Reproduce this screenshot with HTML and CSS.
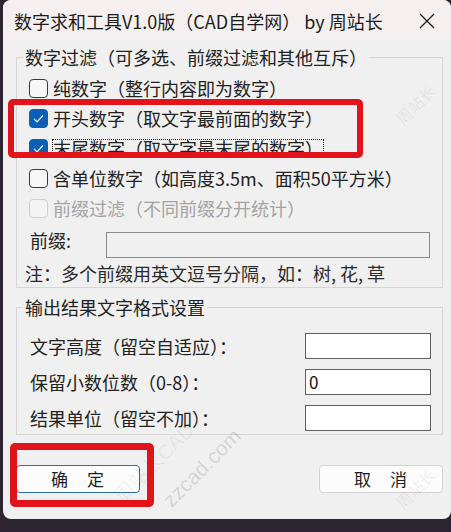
FILE: index.html
```html
<!DOCTYPE html>
<html lang="zh-CN">
<head>
<meta charset="utf-8">
<title>数字求和工具</title>
<link rel="stylesheet" href="styles.css">
</head>
<body>
<div class="window">
  <div class="titlebar">
    <span class="title">数字求和工具V1.0版（CAD自学网） by 周站长</span>
    <svg class="close" width="16" height="16" viewBox="0 0 16 16"><path d="M1 1 L15 15 M15 1 L1 15" stroke="#1e1e1e" stroke-width="1.3" fill="none"/></svg>
  </div>
  <div class="content">
    <fieldset class="group g1">
      <legend>数字过滤（可多选、前缀过滤和其他互斥）</legend>
      <div class="check"><span class="box"></span><span class="lbl">纯数字（整行内容即为数字）</span></div>
      <div class="check"><span class="box checked"><svg width="19" height="19" viewBox="0 0 19 19"><path d="M5 9.8 L8 12.8 L14 6.5" stroke="#fff" stroke-width="1.2" fill="none"/></svg></span><span class="lbl">开头数字（取文字最前面的数字）</span></div>
      <div class="check"><span class="box checked"><svg width="19" height="19" viewBox="0 0 19 19"><path d="M5 9.8 L8 12.8 L14 6.5" stroke="#fff" stroke-width="1.2" fill="none"/></svg></span><span class="lbl focus">末尾数字（取文字最末尾的数字）</span></div>
      <div class="check"><span class="box"></span><span class="lbl">含单位数字（如高度3.5m、面积50平方米）</span></div>
      <div class="check disabled"><span class="box"></span><span class="lbl">前缀过滤（不同前缀分开统计）</span></div>
      <div class="prefix-row"><span class="plabel">前缀:</span><span class="input input-disabled"></span></div>
      <div class="note">注：多个前缀用英文逗号分隔，如：树, 花, 草</div>
    </fieldset>
    <fieldset class="group g2">
      <legend>输出结果文字格式设置</legend>
      <div class="field"><span class="flabel">文字高度（留空自适应）：</span><span class="input"></span></div>
      <div class="field"><span class="flabel">保留小数位数（0-8）：</span><span class="input">0</span></div>
      <div class="field"><span class="flabel">结果单位（留空不加）：</span><span class="input"></span></div>
    </fieldset>
    <div class="buttons">
      <button class="btn primary">确　定</button>
      <button class="btn">取　消</button>
    </div>
  </div>
  <span class="wm wm1">zzcad.com</span>
  <span class="wm wm2">周站长CAD</span>
  <span class="wm wm3">周站长</span>
  <span class="wm wm4">周站长</span>
</div>
<div class="mark mark1"></div>
<div class="mark mark2"></div>
</body>
</html>
```
FILE: styles.css
```css
html, body {
  margin: 0;
  padding: 0;
}
body {
  position: relative;
  width: 451px;
  height: 532px;
  overflow: hidden;
  background: #2c2430;
  font-family: "Noto Sans CJK SC", sans-serif;
  color: #222;
}
.window {
  position: relative;
  margin-left: 3px;
  width: 448px;
  height: 519px;
  background: #f0f0f0;
  border-radius: 8px;
  overflow: hidden;
}
.titlebar {
  height: 39px;
  box-sizing: border-box;
  padding: 2px 16px 0 11px;
  display: flex;
  align-items: center;
  justify-content: space-between;
  background: #f5f0ef;
}
.title {
  font-size: 18px;
  line-height: 22px;
  color: #1b1b1b;
  white-space: nowrap;
}
.close {
  display: block;
}
.content {
  padding: 8px 8px 0 13px;
}
.group {
  margin: 0;
  min-width: 0;
  box-sizing: border-box;
  width: 427px;
  border: 1px solid #d6d6d6;
  padding: 0 0 3px 8px;
}
.group legend {
  font-size: 18px;
  line-height: 20px;
  padding: 0 2px;
  margin-left: -2px;
  color: #222;
}
.g1 {
  padding-top: 6px;
}
.g2 {
  margin-top: 9px;
  padding-top: 16px;
  display: flex;
  flex-direction: column;
  gap: 10px;
}
.check {
  height: 30px;
  display: flex;
  align-items: center;
  padding-left: 4px;
  font-size: 18px;
  white-space: nowrap;
}
.box {
  width: 19px;
  height: 19px;
  box-sizing: border-box;
  border: 1px solid #3a3a3a;
  border-radius: 4px;
  background: #f7f7f7;
  margin-right: 5px;
  flex: none;
  display: flex;
}
.box svg {
  display: block;
  margin: -1px;
}
.box.checked {
  background: #0c5fb6;
  border-color: #0c5fb6;
}
.lbl {
  line-height: 20px;
}
.lbl.focus {
  line-height: 16px;
  outline: 1px dotted #222;
  outline-offset: 0;
}
.check.disabled .box {
  border-color: #cfcfcf;
  background: #f4f4f4;
}
.check.disabled .lbl {
  color: #a3a3a3;
}
.prefix-row {
  margin-top: 9px;
  display: flex;
  align-items: flex-start;
  padding-left: 5px;
  height: 26px;
}
.plabel {
  width: 76px;
  font-size: 18px;
  line-height: 16px;
  flex: none;
}
.input {
  box-sizing: border-box;
  height: 26px;
  border: 1px solid #5e5e5e;
  background: #fff;
  font-size: 17px;
  line-height: 24px;
  padding-left: 3px;
  color: #111;
}
.input-disabled {
  width: 324px;
  background: #f0f0f0;
  border-color: #8a8a8a;
}
.note {
  margin-top: 4px;
  font-size: 18px;
  line-height: 22px;
  color: #2a2a2a;
  white-space: nowrap;
}
.field {
  display: flex;
  align-items: center;
  justify-content: space-between;
  padding-left: 5px;
  padding-right: 11px;
  height: 26px;
}
.flabel {
  font-size: 18px;
  line-height: 20px;
  white-space: nowrap;
}
.field .input {
  width: 126px;
}
.buttons {
  margin-top: 30px;
  width: 427px;
  display: flex;
  justify-content: space-between;
}
.btn {
  width: 124px;
  height: 28px;
  box-sizing: border-box;
  background: #fcfcfc;
  border: 1px solid #d2d2d2;
  border-radius: 4px;
  font-family: "Noto Sans CJK SC", sans-serif;
  font-size: 17px;
  line-height: 24px;
  padding: 0;
  color: #1e1e1e;
  letter-spacing: 1px;
}
.btn.primary {
  border-color: #2c6e9c;
}
.wm {
  position: absolute;
  white-space: nowrap;
  transform: translate(-50%, -50%) rotate(-45deg);
  pointer-events: none;
  font-family: "Liberation Sans", "Noto Sans CJK SC", sans-serif;
}
.wm1 {
  left: 199px;
  top: 468px;
  font-size: 21px;
  color: rgba(0, 0, 0, 0.13);
}
.wm2 {
  left: 150px;
  top: 462px;
  font-size: 20px;
  color: rgba(0, 0, 0, 0.06);
}
.wm3 {
  left: 412px;
  top: 104px;
  font-size: 16px;
  color: rgba(0, 0, 0, 0.07);
}
.wm4 {
  left: 412px;
  top: 488px;
  font-size: 16px;
  color: rgba(0, 0, 0, 0.07);
}
.mark {
  position: absolute;
  box-sizing: border-box;
  border: 6px solid #e3131b;
  border-radius: 5px;
}
.mark1 {
  left: 8px;
  top: 99px;
  width: 355px;
  height: 59px;
}
.mark2 {
  left: 10px;
  top: 443px;
  width: 144px;
  height: 64px;
  border-width: 7px;
}
```
